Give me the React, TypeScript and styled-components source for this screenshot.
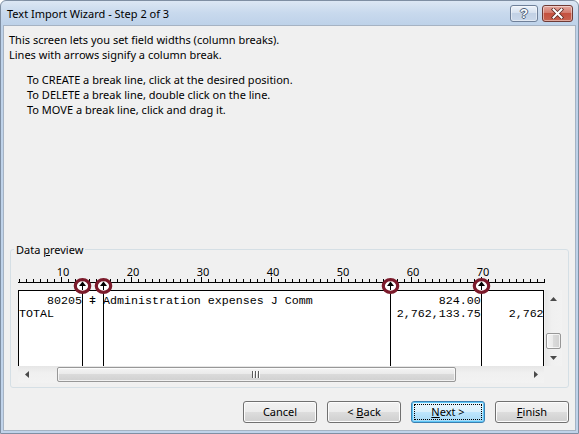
import React from "react";
import styled, { createGlobalStyle } from "styled-components";

// one character of the preview is 7px wide; column k starts at page x = 7k - 9
const CHAR = 7;
const FIRST_COL = 4;
const PANE_LEFT = 18;
const RULER_TOP = 257;

const colX = (k: number) => CHAR * k - 9;

const breaks = [13, 16, 57, 70];

const layoutRow = (parts: [number, string][]) => {
  let s = "";
  for (const [col, text] of parts) {
    while (FIRST_COL + s.length < col) s += " ";
    s += text;
  }
  return s;
};

const rows = [
  layoutRow([
    [8, "80205"],
    [14, "ǂ"],
    [16, "Administration expenses J Comm"],
    [64, "824.00"],
  ]),
  layoutRow([
    [4, "TOTAL"],
    [58, "2,762,133.75"],
    [74, "2,762"],
  ]),
];

const GlobalStyle = createGlobalStyle`
  html, body {
    margin: 0;
    padding: 0;
    background: #fff;
  }
  body {
    font-family: "Noto Sans", "Open Sans", sans-serif;
    font-size: 11px;
    color: #000;
  }
`;

const Window = styled.div`
  width: 579px;
  height: 434px;
  box-sizing: border-box;
  display: flex;
  flex-direction: column;
  padding: 0 2px 2px;
  border: 1px solid #7f8fa3;
  border-radius: 6px 6px 0 0;
  background: linear-gradient(to bottom, #dce7f4 0px, #c8d9ed 12px, #bed2e9 24px, #c0d3ea 100%);
  overflow: hidden;
`;

const TitleBar = styled.div`
  height: 24px;
  flex-shrink: 0;
  display: flex;
  align-items: center;
  padding: 0 3px 0 4px;
`;

const Title = styled.div`
  font-size: 11px;
  line-height: 15px;
  color: #000;
`;

const CaptionButtons = styled.div`
  margin-left: auto;
  display: flex;
  gap: 4px;
`;

const CaptionButton = styled.div<{ $close?: boolean }>`
  width: ${(p) => (p.$close ? 31 : 28)}px;
  height: 17px;
  box-sizing: border-box;
  border: 1px solid ${(p) => (p.$close ? "#6e3a35" : "#6f8099")};
  border-radius: 3px;
  display: flex;
  align-items: center;
  justify-content: center;
  background: ${(p) =>
    p.$close
      ? "linear-gradient(to bottom, #e4a89f 0%, #d37a6c 45%, #c4513f 50%, #c8624f 100%)"
      : "linear-gradient(to bottom, #eef3fa 0%, #d6e1ef 45%, #c2d1e5 50%, #cad8ea 100%)"};
  box-shadow: inset 0 0 0 1px rgba(255, 255, 255, 0.45);
`;

const HelpGlyph = styled.span`
  font-family: "Liberation Sans", sans-serif;
  font-weight: bold;
  font-size: 13px;
  line-height: 13px;
  color: #fff;
  text-shadow: 1px 0 #4d6079, -1px 0 #4d6079, 0 1px #4d6079, 0 -1px #4d6079;
`;

const Client = styled.div`
  flex: 1;
  min-height: 0;
  display: flex;
  flex-direction: column;
  background: #f0f0f0;
  border: 1px solid #a6b3c3;
`;

const Intro = styled.div`
  padding: 6px 0 0 5px;
  line-height: 15px;
`;

const Instructions = styled.div`
  margin-top: 10px;
  padding-left: 23px;
  line-height: 15px;
`;

const Line = styled.div`
  white-space: nowrap;
`;

const GroupBox = styled.fieldset`
  margin: 125px 6px 0;
  padding: 0 6px 4px 7px;
  border: 1px solid #d5dfe5;
  border-radius: 3px;
  min-width: 0;
`;

const Legend = styled.legend`
  padding: 0 2px;
  margin-left: -4px;
  line-height: 15px;
  font-size: 11px;
`;

const PreviewArea = styled.div`
  position: relative;
  width: 544px;
`;

const RulerSvg = styled.svg`
  display: block;
`;

const MarkerLayer = styled.svg`
  position: absolute;
  top: 0;
  left: 0;
  pointer-events: none;
  overflow: visible;
`;

const PreviewGrid = styled.div`
  display: grid;
  grid-template-columns: 526px 17px;
  grid-template-rows: 76px 17px;
  column-gap: 1px;
`;

const DataPane = styled.div`
  position: relative;
  box-sizing: border-box;
  background: #fff;
  border: 1px solid #000;
  border-bottom: none;
  padding-top: 4px;
  overflow: hidden;
`;

const DataRow = styled.div`
  font-family: "Liberation Mono", "Courier New", monospace;
  font-size: 11.67px;
  line-height: 13px;
  height: 13px;
  white-space: pre;
  color: #000;
`;

const BreakLine = styled.div<{ $left: number }>`
  position: absolute;
  top: 0;
  bottom: 0;
  left: ${(p) => p.$left}px;
  width: 1px;
  background: #000;
`;

const ScrollBar = styled.div<{ $vertical?: boolean }>`
  display: flex;
  flex-direction: ${(p) => (p.$vertical ? "column" : "row")};
  background: ${(p) =>
    p.$vertical
      ? "linear-gradient(to right, #e6e6e6, #f0f0f0 40%, #f2f2f2)"
      : "linear-gradient(to bottom, #e6e6e6, #f0f0f0 40%, #f2f2f2)"};
`;

const ArrowButton = styled.div`
  width: 17px;
  height: 17px;
  flex-shrink: 0;
  display: flex;
  align-items: center;
  justify-content: center;
`;

const Track = styled.div<{ $vertical?: boolean; $offset: number }>`
  flex: 1;
  display: flex;
  flex-direction: ${(p) => (p.$vertical ? "column" : "row")};
  align-items: center;
  ${(p) => (p.$vertical ? `padding-top: ${p.$offset}px;` : `padding-left: ${p.$offset}px;`)}
`;

const Thumb = styled.div<{ $vertical?: boolean; $size: number }>`
  box-sizing: border-box;
  ${(p) => (p.$vertical ? `height: ${p.$size}px; width: 15px;` : `width: ${p.$size}px; height: 15px;`)}
  border: 1px solid #979797;
  border-radius: 2px;
  background: ${(p) =>
    p.$vertical
      ? "linear-gradient(to right, #f4f4f4 0%, #eaeaea 45%, #dadada 50%, #d0d0d0 100%)"
      : "linear-gradient(to bottom, #f4f4f4 0%, #eaeaea 45%, #dadada 50%, #d0d0d0 100%)"};
  box-shadow: inset 0 0 0 1px rgba(255, 255, 255, 0.7);
  display: flex;
  align-items: center;
  justify-content: center;
`;

const Corner = styled.div`
  background: #f0f0f0;
`;

const ButtonRow = styled.div`
  display: flex;
  justify-content: flex-end;
  gap: 10px;
  margin-top: 13px;
  padding-right: 6px;
`;

const Button = styled.button<{ $default?: boolean }>`
  position: relative;
  width: 74px;
  height: 22px;
  padding: 0;
  font-family: "Noto Sans", "Open Sans", sans-serif;
  font-size: 11px;
  line-height: 20px;
  color: #000;
  border: 1px solid ${(p) => (p.$default ? "#3c7fb1" : "#707070")};
  border-radius: 3px;
  background: ${(p) =>
    p.$default
      ? "linear-gradient(to bottom, #eaf6fd 0%, #d9f0fc 50%, #bee6fd 50%, #a7d9f5 100%)"
      : "linear-gradient(to bottom, #f2f2f2 0%, #ebebeb 50%, #dddddd 50%, #cfcfcf 100%)"};
  box-shadow: inset 0 0 0 1px ${(p) => (p.$default ? "#5ec8f7" : "#fcfcfc")};

  &::after {
    content: "";
    display: ${(p) => (p.$default ? "block" : "none")};
    position: absolute;
    inset: 2px;
    border: 1px dotted #000;
  }
`;

const Ruler = () => {
  const ticks = [];
  for (let k = FIRST_COL; k <= 79; k++) {
    const x = colX(k) - PANE_LEFT;
    const major = k % 10 === 0;
    ticks.push(<rect key={k} x={x} y={major ? 20 : 22} width={1} height={major ? 5 : 3} fill="#000" />);
  }
  const labels = [10, 20, 30, 40, 50, 60, 70].map((n) => (
    <text
      key={n}
      x={colX(n) - PANE_LEFT + 2}
      y={19}
      textAnchor="middle"
      fontFamily='"Noto Sans", "Open Sans", sans-serif'
      fontSize="11"
      fill="#000"
    >
      {n}
    </text>
  ));
  return (
    <RulerSvg width={528} height={33}>
      <rect x={0} y={25} width={527} height={1} fill="#000" />
      {ticks}
      {labels}
    </RulerSvg>
  );
};

const Markers = () => (
  <MarkerLayer width={528} height={40}>
    {breaks.map((k) => {
      const cx = colX(k) - PANE_LEFT;
      const cy = 286 - RULER_TOP;
      return (
        <g key={k}>
          <ellipse cx={cx + 0.5} cy={cy} rx={7.2} ry={6.3} fill="#fff" stroke="#7b1a2b" strokeWidth={3.2} />
          <polygon points={`${cx + 0.5},${cy - 4.5} ${cx - 3},${cy} ${cx + 4},${cy}`} fill="#000" />
          <rect x={cx} y={cy} width={1} height={4} fill="#000" />
        </g>
      );
    })}
  </MarkerLayer>
);

const Arrow = ({ dir }: { dir: "up" | "down" | "left" | "right" }) => {
  const pts = {
    up: "0,4 7,4 3.5,0",
    down: "0,0 7,0 3.5,4",
    left: "4,0 4,7 0,3.5",
    right: "0,0 0,7 4,3.5",
  }[dir];
  const vertical = dir === "up" || dir === "down";
  return (
    <svg width={vertical ? 7 : 4} height={vertical ? 4 : 7}>
      <polygon points={pts} fill="#4a4a4a" />
    </svg>
  );
};

const Grip = () => (
  <svg width={9} height={7}>
    {[0, 3, 6].map((x) => (
      <g key={x}>
        <rect x={x} y={0} width={1} height={7} fill="#5a5a5a" />
        <rect x={x + 1} y={0} width={1} height={7} fill="#fdfdfd" />
      </g>
    ))}
  </svg>
);

const CloseGlyph = () => (
  <svg width={13} height={11} viewBox="0 0 13 11">
    <path d="M2.5 1.5 L10.5 9.5 M10.5 1.5 L2.5 9.5" stroke="#5a2a24" strokeWidth={3.6} strokeLinecap="square" />
    <path d="M2.5 1.5 L10.5 9.5 M10.5 1.5 L2.5 9.5" stroke="#fff" strokeWidth={2} strokeLinecap="square" />
  </svg>
);

export default function App() {
  return (
    <>
      <GlobalStyle />
      <Window>
        <TitleBar>
          <Title>Text Import Wizard - Step 2 of 3</Title>
          <CaptionButtons>
            <CaptionButton>
              <HelpGlyph>?</HelpGlyph>
            </CaptionButton>
            <CaptionButton $close>
              <CloseGlyph />
            </CaptionButton>
          </CaptionButtons>
        </TitleBar>
        <Client>
          <Intro>
            <Line>This screen lets you set field widths (column breaks).</Line>
            <Line>Lines with arrows signify a column break.</Line>
          </Intro>
          <Instructions>
            <Line>To CREATE a break line, click at the desired position.</Line>
            <Line>To DELETE a break line, double click on the line.</Line>
            <Line>To MOVE a break line, click and drag it.</Line>
          </Instructions>
          <GroupBox>
            <Legend>
              Data <u>p</u>review
            </Legend>
            <PreviewArea>
              <Ruler />
              <PreviewGrid>
                <DataPane>
                  {rows.map((r, i) => (
                    <DataRow key={i}>{r}</DataRow>
                  ))}
                  {breaks.map((k) => (
                    <BreakLine key={k} $left={colX(k) - PANE_LEFT - 1} />
                  ))}
                </DataPane>
                <ScrollBar $vertical>
                  <ArrowButton>
                    <Arrow dir="up" />
                  </ArrowButton>
                  <Track $vertical $offset={26}>
                    <Thumb $vertical $size={16} />
                  </Track>
                  <ArrowButton>
                    <Arrow dir="down" />
                  </ArrowButton>
                </ScrollBar>
                <ScrollBar>
                  <ArrowButton>
                    <Arrow dir="left" />
                  </ArrowButton>
                  <Track $offset={22}>
                    <Thumb $size={399}>
                      <Grip />
                    </Thumb>
                  </Track>
                  <ArrowButton>
                    <Arrow dir="right" />
                  </ArrowButton>
                </ScrollBar>
                <Corner />
              </PreviewGrid>
              <Markers />
            </PreviewArea>
          </GroupBox>
          <ButtonRow>
            <Button>Cancel</Button>
            <Button>
              &lt; <u>B</u>ack
            </Button>
            <Button $default>
              <u>N</u>ext &gt;
            </Button>
            <Button>
              <u>F</u>inish
            </Button>
          </ButtonRow>
        </Client>
      </Window>
    </>
  );
}
